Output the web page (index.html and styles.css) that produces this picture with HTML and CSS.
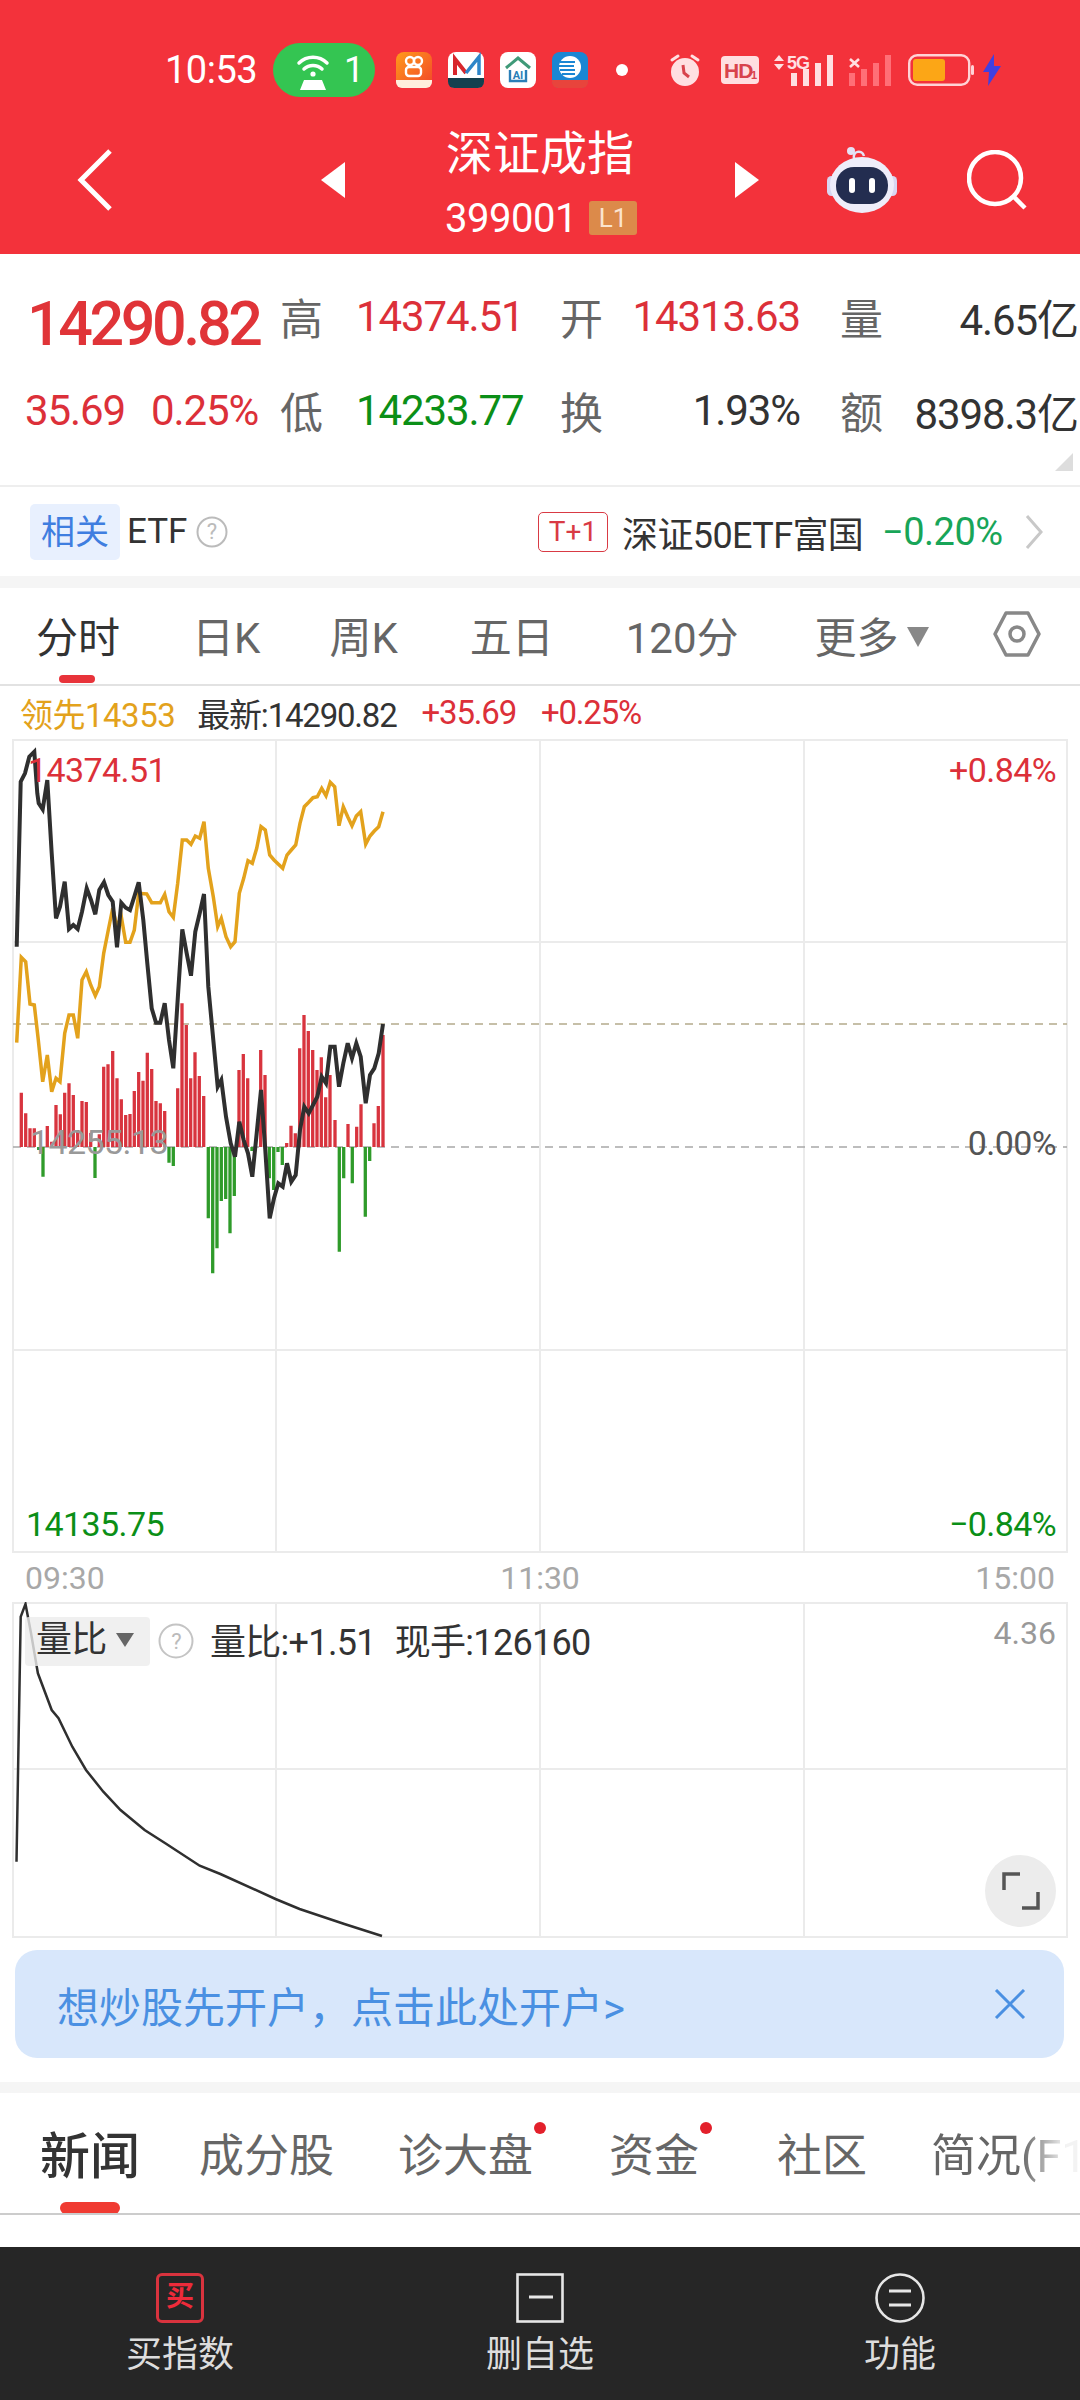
FILE: index.html
```html
<!DOCTYPE html>
<html lang="zh-CN">
<head>
    <meta charset="UTF-8">
    <meta name="viewport" content="width=device-width, initial-scale=1.0">
    <title>深证成指 399001</title>
    <link rel="stylesheet" href="styles.css">
</head>
<body>
    <div class="topbar">
        <div class="status-bar">
            <span class="clock">10:53</span>
            <div class="hotspot">
                <svg width="42" height="40" viewBox="0 0 42 40"><path d="M7 13a20 20 0 0 1 28 0M12 19a13 13 0 0 1 18 0" fill="none" stroke="#fff" stroke-width="3.5" stroke-linecap="round"/><circle cx="21" cy="24" r="2.6" fill="#fff"/><path d="M8 40l4-10h18l4 10z" fill="#fff"/></svg>
                <span>1</span>
            </div>
            <div class="app-icons">
                <svg width="36" height="36" viewBox="0 0 36 36"><defs><linearGradient id="ks" x1="0" y1="0" x2="1" y2="1"><stop offset="0" stop-color="#ff9a1a"/><stop offset="1" stop-color="#f2452a"/></linearGradient></defs><rect width="36" height="36" rx="8" fill="url(#ks)"/><circle cx="14" cy="9" r="4" fill="none" stroke="#fff" stroke-width="2.4"/><circle cx="22" cy="9" r="4" fill="none" stroke="#fff" stroke-width="2.4"/><rect x="10" y="15" width="15" height="9" rx="3" fill="none" stroke="#fff" stroke-width="2.4"/><path d="M0 28h36v2a6 6 0 0 1-6 6H6a6 6 0 0 1-6-6z" fill="#ffeedd"/></svg>
                <svg width="36" height="36" viewBox="0 0 36 36"><rect width="36" height="36" rx="8" fill="#fff"/><path d="M0 26h36v4a6 6 0 0 1-6 6H6a6 6 0 0 1-6-6z" fill="#14404f"/><path d="M7 23V7l11 14" fill="none" stroke="#d8262c" stroke-width="4"/><path d="M18 21L31 5v18" fill="none" stroke="#2e86c9" stroke-width="3.5"/></svg>
                <svg width="36" height="36" viewBox="0 0 36 36"><rect width="36" height="36" rx="8" fill="#fff"/><path d="M6 16L18 6l12 10" fill="none" stroke="#3f9a78" stroke-width="3"/><path d="M10 18v11h16V18" fill="none" stroke="#2a7fb8" stroke-width="2.4"/><text x="18" y="27" class="ai-text">AI</text></svg>
                <svg width="36" height="36" viewBox="0 0 36 36"><rect width="36" height="36" rx="8" fill="#1b86d3"/><circle cx="18" cy="15" r="11" fill="#fff"/><path d="M8 10h15M7 14h15M8 18h15M10 22h13" stroke="#1b86d3" stroke-width="2"/><path d="M0 28h36v2a6 6 0 0 1-6 6H6a6 6 0 0 1-6-6z" fill="#e8443c"/></svg>
            </div>
            <span class="status-dot"></span>
            <svg class="alarm" width="32" height="34" viewBox="0 0 32 34"><circle cx="16" cy="19" r="14" fill="#ffdfe1"/><path d="M3 7l6-4M29 7l-6-4" stroke="#ffdfe1" stroke-width="3" stroke-linecap="round"/><path d="M14 12l1 8 5 4" fill="none" stroke="#d8434c" stroke-width="3"/></svg>
            <svg class="hd" width="38" height="28" viewBox="0 0 38 28"><rect width="38" height="28" rx="4" fill="#ffdfe1"/><text x="3" y="22" class="hd-text">HD</text><text x="30" y="23" class="hd-sub">1</text></svg>
            <svg class="signal" width="60" height="32" viewBox="0 0 60 32"><path d="M0 7l5-6 5 6zM0 10h10l-5 6z" fill="#ffdfe1"/><text x="13" y="15" class="g-text">5G</text><path d="M17 19h6v13h-6zM29 15h6v17h-6zM41 9h6v23h-6zM53 1h6v31h-6z" fill="#ffdfe1"/></svg>
            <svg class="signal-off" width="44" height="32" viewBox="0 0 44 32"><path d="M1 5l9 8M10 5l-9 8" stroke="#ffdfe1" stroke-width="2.6"/><path d="M0 19h6v13H0zM12 15h6v17h-6zM24 9h6v23h-6zM36 1h6v31h-6z" fill="#ff6f77"/></svg>
            <svg class="battery" width="66" height="32" viewBox="0 0 66 32"><rect x="1.2" y="1.2" width="60" height="29.6" rx="8" fill="none" stroke="#ffd3d6" stroke-width="2.4"/><rect x="5" y="5" width="32" height="22" rx="3" fill="#fca616"/><rect x="63" y="11" width="3" height="10" rx="1.5" fill="#ffd3d6"/></svg>
            <svg class="bolt" width="18" height="32" viewBox="0 0 18 32"><path d="M11 0L0 18h6l-1 14L18 12h-7z" fill="#4140e0"/></svg>
        </div>
        <div class="nav-row">
            <svg class="back" width="36" height="64" viewBox="0 0 36 64"><path d="M33 3L4 32l29 29" fill="none" stroke="#fff" stroke-width="5"/></svg>
            <svg class="prev" width="24" height="36" viewBox="0 0 24 36"><path d="M24 0v36L0 18z" fill="#fff"/></svg>
            <div class="title-block">
                <div class="title">深证成指</div>
                <div class="code-row"><span class="code">399001</span><span class="level">L1</span></div>
            </div>
            <svg class="next" width="24" height="36" viewBox="0 0 24 36"><path d="M0 0v36l24-18z" fill="#fff"/></svg>
            <svg class="robot" width="72" height="66" viewBox="0 0 72 66"><path d="M28 12c-2-8 8-10 10-3" fill="none" stroke="#e4e2f6" stroke-width="2.5"/><circle cx="25" cy="4" r="4" fill="#e4e2f6"/><rect x="1" y="29" width="9" height="20" rx="4.5" fill="#d8d6f2"/><rect x="62" y="29" width="9" height="20" rx="4.5" fill="#d8d6f2"/><ellipse cx="36" cy="38" rx="32" ry="28" fill="#eeedfa"/><rect x="10" y="20" width="52" height="37" rx="18" fill="#232d50"/><rect x="23" y="31" width="6" height="15" rx="3" fill="#fff"/><rect x="43" y="31" width="6" height="15" rx="3" fill="#fff"/></svg>
            <svg class="search" width="60" height="60" viewBox="0 0 60 60"><circle cx="28" cy="28" r="26" fill="none" stroke="#fff" stroke-width="4.5"/><path d="M47 47l11 11" stroke="#fff" stroke-width="4.5"/></svg>
        </div>
    </div>

    <div class="stats">
        <div class="quote-main">14290.82</div>
        <div class="stat-label">高</div>
        <div class="stat-val first up">14374.51</div>
        <div class="stat-label">开</div>
        <div class="stat-val mid up">14313.63</div>
        <div class="stat-label">量</div>
        <div class="stat-val last">4.65亿</div>

        <div class="quote-sub up"><span>35.69</span><span>0.25%</span></div>
        <div class="stat-label">低</div>
        <div class="stat-val first down">14233.77</div>
        <div class="stat-label">换</div>
        <div class="stat-val mid">1.93%</div>
        <div class="stat-label">额</div>
        <div class="stat-val last">8398.3亿</div>
        <span class="corner"></span>
    </div>

    <div class="etf-row">
        <span class="etf-tag">相关</span>
        <span class="etf-name">ETF</span>
        <svg class="help" width="32" height="32" viewBox="0 0 32 32"><circle cx="16" cy="16" r="14.5" fill="none" stroke="#bbb" stroke-width="2"/><text x="16" y="23" class="help-text">?</text></svg>
        <span class="t1">T+1</span>
        <span class="fund">深证50ETF富国</span>
        <span class="fund-pct">−0.20%</span>
        <svg width="18" height="34" viewBox="0 0 18 34"><path d="M2 1l14 16L2 33" fill="none" stroke="#c8c8c8" stroke-width="3"/></svg>
    </div>
    <div class="gap"></div>

    <div class="period-tabs">
        <span class="period active">分时</span>
        <span class="period">日K</span>
        <span class="period">周K</span>
        <span class="period">五日</span>
        <span class="period">120分</span>
        <span class="period">更多<i class="more-arrow"></i></span>
        <svg width="48" height="46" viewBox="0 0 48 46"><path d="M13 2h22l11 21-11 21H13L2 23z" fill="none" stroke="#888" stroke-width="3.5" stroke-linejoin="round"/><circle cx="24" cy="23" r="7" fill="none" stroke="#888" stroke-width="3.5"/></svg>
    </div>

    <div class="legend">
        <span class="lead">领先14353</span>
        <span>最新:14290.82</span>
        <span class="up">+35.69</span>
        <span class="up">+0.25%</span>
    </div>

    <div class="chart-main">
        <svg width="1080" height="814" viewBox="0 739 1080 814">
            <path class="grid" d="M13 740H1067V1552H13ZM276 740V1552M540 740V1552M804 740V1552M13 942H1067M13 1350H1067"/>
            <path class="dash-tan" d="M13 1024H1067"/>
            <path class="dash-gray" d="M13 1147H1067"/>
            <path class="bars-red" d="M21.3 1147V1092.7M25.7 1147V1113.3M30 1147V1128.3M34.3 1147V1128.3M47.3 1147V1126M51.7 1147V1141.7M56 1147V1105M60.3 1147V1114.3M64.7 1147V1092.7M69 1147V1083.3M73.3 1147V1095M77.7 1147V1130M82 1147V1101M86.3 1147V1102M90.7 1147V1133M99.3 1147V1134.3M103.7 1147V1066.7M108 1147V1064.3M112.7 1147V1051M117 1147V1078.3M121.3 1147V1099.3M125.7 1147V1115M130 1147V1114M134.3 1147V1091M138.7 1147V1072M143 1147V1080.7M147.3 1147V1052.7M151.7 1147V1069M156 1147V1101M160.3 1147V1103.3M164.7 1147V1111M177.7 1147V1088.3M182 1147V1003.3M186.3 1147V1025M190.7 1147V1078.3M195 1147V1052.3M199.3 1147V1076M203.7 1147V1096M239 1147V1070M243.3 1147V1054M247.7 1147V1078.3M260.7 1147V1050M265 1147V1075M286.7 1147V1143M291 1147V1125.7M295.3 1147V1133.3M299.7 1147V1048.3M304 1147V1015M308.3 1147V1031M312.7 1147V1050M317 1147V1070M321.3 1147V1057.3M325.7 1147V1097.3M330 1147V1075M335 1147V1120M348 1147V1124M356.7 1147V1126.7M361 1147V1104.3M374 1147V1123.3M378.3 1147V1106M383 1147V1035"/>
            <path class="bars-green" d="M38.7 1147V1150M43 1147V1176.7M95 1147V1178M169 1147V1162.7M173.3 1147V1166M208.3 1147V1218.3M212.7 1147V1273.3M217 1147V1248.3M221.3 1147V1201M225.7 1147V1199M230 1147V1233.3M234.3 1147V1196M252 1147V1151M269.3 1147V1178.3M273.7 1147V1190M278 1147V1152M282.3 1147V1165M339.3 1147V1251.7M343.7 1147V1178.3M352.3 1147V1183.3M365.3 1147V1216.7M369.7 1147V1161"/>
            <polyline class="line-lead" points="16.7,1042.7 21.3,957.3 25.7,961.7 30,1004 34.3,1005 38.3,1040 42.7,1081.7 47.3,1055 51.7,1091.7 56,1078.3 60,1081.7 64.7,1033.3 69,1015 73.3,1015 77.7,1038.3 82,980 86.3,971.7 90.7,985 95.3,995.7 99.3,986.7 103.7,953.3 108.3,930 112.7,908.3 117,926.7 121.3,916.7 125.7,942.3 130,942.3 134.3,930 138.7,893.3 146.7,894 151.7,902.7 160.3,902.7 164.7,894.3 169,911.7 173.3,917.3 177.7,883.3 182.3,840 186.7,840 191,844.3 195.3,836 199.7,838.3 204,821.7 208.3,868.3 213.3,896.7 217.7,926.7 221.3,918.3 226,936.7 230.7,946.7 235,941.7 239.3,893.3 243.7,878.3 248,860.7 252.3,863.3 256.7,848.3 261,826.7 265.3,830 269.7,855 274,860 282.7,868.3 287,855 291.3,850 295.7,845 300,823.3 304.3,806.7 308.7,802.3 313,797.7 317.3,796.7 321.7,788.3 326,795.7 330.3,782.3 334.7,786.7 339,825.7 343.3,806.7 347.7,816.7 352,825.7 356.3,816 360.7,811.7 365.7,844.3 370,836 374.3,831 378.7,826.7 383,811.7"/>
            <polyline class="line-price" points="16.7,946.7 20.7,781.7 25,773.3 29.3,756.7 34.3,751.7 37.3,793.3 38.7,803.3 42.7,809.3 47.3,780 51.7,853.3 56,918.3 60,906.7 64.7,881.7 69,929 73.3,925 77.7,929 82,911.7 86.7,888.3 91,900 95.3,914.3 99.3,890 104,882.3 108.3,895 112.7,901.7 117,947.3 121.3,902.7 125.7,907.7 130,910 134.3,896.7 138.7,882.3 143.3,920 147.3,963.3 151.7,1008.3 156,1022.7 160.3,1022.7 164.7,1003.3 169,1040 173.3,1068.3 178.3,990 182.3,929.3 186.7,953.3 191,975.7 195.3,931.7 199.7,913.3 204,894 208.3,986.7 213.3,1040 217.7,1086.7 221.3,1080 226,1116.7 230.7,1143.3 235,1156.7 239.3,1121.7 243.7,1140 248,1153.3 252.3,1176.7 256.7,1133.3 261,1090 265.3,1150 269.7,1218.3 274,1198.3 278.3,1183.3 282.7,1186.7 287,1163.3 291.3,1181.7 295.7,1175 300,1130 304.3,1106.7 308.7,1113.3 313,1105 317.3,1096.7 321.7,1076.7 326,1083.3 330.3,1046.7 334.7,1046.7 339,1086.7 343.3,1063.3 347.7,1043.3 352,1058.3 356.3,1043.3 360.7,1056.7 365.7,1103.3 370,1075 374.3,1068.3 378.7,1053.3 383,1024"/>
        </svg>
        <span class="axis top-left up">14374.51</span>
        <span class="axis top-right up">+0.84%</span>
        <span class="axis mid-left">14255.13</span>
        <span class="axis mid-right">0.00%</span>
        <span class="axis bottom-left down">14135.75</span>
        <span class="axis bottom-right down">−0.84%</span>
    </div>

    <div class="time-row">
        <span>09:30</span>
        <span>11:30</span>
        <span>15:00</span>
    </div>

    <div class="chart-sub">
        <svg width="1080" height="336" viewBox="0 1602 1080 336">
            <path class="grid" d="M13 1603H1067V1937H13ZM276 1603V1937M540 1603V1937M804 1603V1937M13 1769H1067"/>
            <polyline class="line-ratio" points="16.5,1861.7 20.7,1616.7 25.5,1604 31,1633 37.9,1673.3 51.7,1710 58.5,1718.3 72.3,1746.7 86,1770 103.3,1791.7 120.5,1810 144.6,1830 165.3,1843.3 199.7,1865.7 220.4,1874 275.5,1899 299.6,1909 344.4,1924 382,1936"/>
        </svg>
        <div class="ratio-bar">
            <span class="ratio-tag">量比<i class="tag-arrow"></i></span>
            <svg class="ratio-help" width="36" height="36" viewBox="0 0 36 36"><circle cx="18" cy="18" r="16.5" fill="none" stroke="#c4c4c4" stroke-width="2"/><text x="18" y="26" class="help-text">?</text></svg>
            <span class="ratio-val">量比:+1.51</span>
            <span class="ratio-hand">现手:126160</span>
        </div>
        <span class="ratio-max">4.36</span>
        <div class="expand">
            <svg width="38" height="38" viewBox="0 0 38 38"><path d="M2 18V2h16M36 20v16H20" fill="none" stroke="#555" stroke-width="3.5"/></svg>
        </div>
    </div>

    <div class="banner">
        <span>想炒股先开户，点击此处开户&gt;</span>
        <svg width="32" height="30" viewBox="0 0 32 30"><path d="M2 1l28 28M30 1L2 29" stroke="#4a90e2" stroke-width="3"/></svg>
    </div>
    <div class="gap bottom-gap"></div>

    <div class="news-tabs">
        <span class="news-tab active">新闻</span>
        <span class="news-tab">成分股</span>
        <span class="news-tab dotted">诊大盘</span>
        <span class="news-tab dotted">资金</span>
        <span class="news-tab">社区</span>
        <span class="news-tab faded">简况(F10)</span>
    </div>
    <div class="spacer"></div>

    <div class="footer">
        <div class="foot-item">
            <div class="buy-icon">买</div>
            <span>买指数</span>
        </div>
        <div class="foot-item">
            <svg width="48" height="50" viewBox="0 0 48 50"><rect x="1.5" y="1.5" width="45" height="47" fill="none" stroke="#e6e6e6" stroke-width="2.6"/><path d="M13 24h24" stroke="#e6e6e6" stroke-width="3"/></svg>
            <span>删自选</span>
        </div>
        <div class="foot-item">
            <svg width="50" height="50" viewBox="0 0 50 50"><circle cx="25" cy="25" r="23.5" fill="none" stroke="#e6e6e6" stroke-width="2.6"/><path d="M14 18h22M14 32h22" stroke="#e6e6e6" stroke-width="3"/></svg>
            <span>功能</span>
        </div>
    </div>
</body>
</html>
```

FILE: styles.css
```css
* {
    box-sizing: border-box;
}
body {
    margin: 0;
    width: 1080px;
    height: 2400px;
    overflow: hidden;
    background-color: white;
    font-family: Roboto, "Noto Sans CJK SC", sans-serif;
    color: #333;
}
svg {
    display: block;
    flex: none;
}
.up {
    color: #dc3039;
}
.down {
    color: #0b8f17;
}

/* red header */
.topbar {
    height: 254px;
    background-color: #f3323b;
    color: white;
}
.status-bar {
    display: flex;
    align-items: center;
    height: 97px;
    padding: 43px 0 0 165px;
}
.clock {
    width: 92px;
    font-size: 38px;
    letter-spacing: -0.5px;
}
.hotspot {
    display: flex;
    align-items: center;
    gap: 10px;
    width: 102px;
    height: 54px;
    margin-left: 16px;
    padding-left: 19px;
    border-radius: 27px;
    background-color: #34c552;
    font-size: 36px;
}
.app-icons {
    display: flex;
    gap: 16px;
    margin-left: 21px;
}
.ai-text {
    font: bold 11px Roboto, sans-serif;
    fill: #2a7fb8;
    text-anchor: middle;
}
.status-dot {
    width: 12px;
    height: 12px;
    margin-left: 28px;
    border-radius: 50%;
    background-color: white;
}
.alarm {
    margin-left: 41px;
}
.hd {
    margin-left: 20px;
}
.hd-text {
    font: bold 21px "Liberation Sans", sans-serif;
    fill: #d8434c;
    letter-spacing: -1px;
}
.hd-sub {
    font: bold 11px "Liberation Sans", sans-serif;
    fill: #d8434c;
}
.signal {
    margin-left: 15px;
}
.g-text {
    font: bold 18px "Liberation Sans", sans-serif;
    fill: #ffdfe1;
    letter-spacing: -1px;
}
.signal-off {
    margin-left: 15px;
}
.battery {
    margin-left: 15px;
}
.bolt {
    margin-left: 9px;
}
.nav-row {
    display: flex;
    align-items: center;
    height: 157px;
    padding: 8px 0 0 77px;
}
.prev {
    margin-left: 208px;
}
.title-block {
    align-self: flex-start;
    width: 390px;
    margin-top: 21px;
    text-align: center;
}
.title {
    height: 56px;
    margin-bottom: 6px;
    font-size: 47px;
    line-height: 56px;
}
.code-row {
    display: flex;
    justify-content: center;
    align-items: center;
    gap: 12px;
    height: 60px;
    padding-left: 2px;
}
.code {
    font-size: 40px;
    letter-spacing: -0.5px;
}
.level {
    width: 48px;
    height: 34px;
    border-radius: 3px;
    background-color: #dc8a4a;
    color: #fbe3cf;
    font-size: 26px;
    line-height: 34px;
}
.robot {
    margin-left: 67px;
}
.search {
    margin-left: 69px;
}

/* quote block */
.stats {
    position: relative;
    display: grid;
    grid-template-columns: 280px 42px 238px 40px 240px 40px 200px;
    grid-auto-rows: 94px;
    align-items: center;
    height: 231px;
    padding-top: 15px;
}
.quote-main {
    padding: 16px 0 0 27px;
    color: #e03438;
    font-size: 61px;
    font-weight: 500;
    letter-spacing: -3.4px;
}
.quote-sub {
    display: flex;
    gap: 26px;
    padding-left: 25px;
    font-size: 42px;
    letter-spacing: -1.1px;
}
.stat-label {
    color: #666;
    font-size: 43px;
}
.stat-val {
    font-size: 42px;
    letter-spacing: -1.1px;
    white-space: nowrap;
}
.stat-val.first {
    padding-left: 34px;
}
.stat-val.mid {
    padding-right: 40px;
    text-align: right;
}
.stat-val.last {
    padding-right: 2px;
    text-align: right;
}
.corner {
    position: absolute;
    top: 199px;
    left: 1055px;
    border-style: solid;
    border-width: 0 0 18px 18px;
    border-color: transparent transparent #ddd transparent;
}

/* related fund */
.etf-row {
    display: flex;
    align-items: center;
    height: 91px;
    padding-left: 30px;
    border-top: 2px solid #eee;
}
.etf-tag {
    width: 90px;
    height: 56px;
    border-radius: 5px;
    background-color: #e8f0fe;
    color: #3f7ee0;
    font-size: 34px;
    line-height: 56px;
    text-align: center;
}
.etf-name {
    width: 60px;
    margin-left: 7px;
    font-size: 35px;
}
.help-text {
    font: 22px Roboto, sans-serif;
    fill: #bbb;
    text-anchor: middle;
}
.help {
    margin-left: 9px;
}
.t1 {
    width: 70px;
    height: 40px;
    margin-left: 310px;
    border: 1.5px solid #d93a44;
    border-radius: 5px;
    color: #d93a44;
    font-size: 28px;
    line-height: 37px;
    text-align: center;
}
.fund {
    width: 240px;
    margin-left: 14px;
    font-size: 36px;
    letter-spacing: -0.6px;
    white-space: nowrap;
}
.fund-pct {
    width: 143px;
    margin-left: 20px;
    color: #18a558;
    font-size: 38px;
    letter-spacing: -0.5px;
}
.gap {
    height: 12px;
    background-color: #f5f5f5;
}

/* period tabs */
.period-tabs {
    display: flex;
    align-items: center;
    height: 98px;
    padding: 0 0 4px 36px;
    border-bottom: 2px solid #e2e2e2;
}
.period {
    position: relative;
    margin-right: 72px;
    color: #666;
    font-size: 42px;
    white-space: nowrap;
}
.period:nth-child(1) {
    margin-right: 72px;
}
.period:nth-child(2) {
    margin-right: 69px;
}
.period:nth-child(3) {
    margin-right: 72px;
}
.period:nth-child(5) {
    margin-right: 76px;
}
.period:nth-child(6) {
    margin-right: 64px;
}
.period.active {
    color: #333;
}
.period.active::after {
    content: "";
    position: absolute;
    left: 23px;
    bottom: -18px;
    width: 36px;
    height: 8px;
    border-radius: 4px;
    background-color: #e8333a;
}
.more-arrow {
    display: inline-block;
    margin-left: 8px;
    vertical-align: 6px;
    border-style: solid;
    border-width: 20px 11px 0 11px;
    border-color: #888 transparent transparent transparent;
}
.legend {
    display: flex;
    align-items: center;
    gap: 25px;
    height: 53px;
    padding-left: 20px;
    font-size: 33px;
    letter-spacing: -1.2px;
}
.lead {
    margin-right: -3px;
    color: #e3a21c;
    letter-spacing: -0.5px;
}

/* charts */
.chart-main,
.chart-sub {
    position: relative;
}
.grid {
    fill: none;
    stroke: #ebebeb;
    stroke-width: 2;
}
.dash-tan {
    stroke: #b4ab8c;
    stroke-width: 1.5;
    stroke-dasharray: 8 6;
}
.dash-gray {
    stroke: #a8a8a8;
    stroke-width: 1.5;
    stroke-dasharray: 8 6;
}
.bars-red {
    stroke: #d8343e;
    stroke-width: 3.3;
}
.bars-green {
    stroke: #2f9b2a;
    stroke-width: 3.3;
}
.line-lead {
    fill: none;
    stroke: #e3a21c;
    stroke-width: 3.5;
}
.line-price {
    fill: none;
    stroke: #2f2f2f;
    stroke-width: 4;
}
.line-ratio {
    fill: none;
    stroke: #2f2f2f;
    stroke-width: 2.5;
}
.axis {
    position: absolute;
    font-size: 34px;
    letter-spacing: -0.6px;
    line-height: 40px;
}
.top-left {
    top: 11px;
    left: 28px;
}
.top-right {
    top: 11px;
    right: 24px;
}
.mid-left {
    top: 383px;
    left: 30px;
    color: #999;
}
.mid-right {
    top: 384px;
    right: 24px;
    color: #555;
}
.bottom-left {
    top: 765px;
    left: 26px;
}
.bottom-right {
    top: 765px;
    right: 24px;
}
.time-row {
    display: flex;
    justify-content: space-between;
    align-items: center;
    height: 49px;
    padding: 0 25px;
    color: #a8a8a8;
    font-size: 32px;
}
.ratio-bar {
    position: absolute;
    top: 11px;
    left: 25px;
    display: flex;
    align-items: center;
    font-size: 36px;
    letter-spacing: -0.7px;
}
.ratio-tag {
    width: 125px;
    height: 49px;
    padding-left: 11px;
    border-radius: 4px;
    background-color: rgba(236, 236, 236, 0.8);
    line-height: 47px;
    white-space: nowrap;
}
.tag-arrow {
    display: inline-block;
    margin-left: 9px;
    vertical-align: 5px;
    border-style: solid;
    border-width: 14px 9px 0 9px;
    border-color: #666 transparent transparent transparent;
}
.ratio-help {
    margin: 0 16px 0 8px;
}
.ratio-val {
    margin-right: 19px;
    padding-bottom: 4px;
}
.ratio-hand {
    padding-bottom: 4px;
}
.ratio-max {
    position: absolute;
    top: 11px;
    right: 24px;
    color: #999;
    font-size: 32px;
    line-height: 40px;
}
.expand {
    position: absolute;
    top: 253px;
    left: 985px;
    display: flex;
    justify-content: center;
    align-items: center;
    width: 71px;
    height: 72px;
    border-radius: 50%;
    background-color: #ececec;
}

/* open account banner */
.banner {
    display: flex;
    justify-content: space-between;
    align-items: center;
    height: 108px;
    margin: 12px 16px 24px 15px;
    padding: 0 38px 0 42px;
    border-radius: 22px;
    background-color: #d8e7fb;
    color: #4a90e2;
    font-size: 42px;
}
.bottom-gap {
    height: 11px;
}

/* news tabs */
.news-tabs {
    display: flex;
    align-items: center;
    height: 122px;
    padding: 0 0 2px 40px;
    overflow: hidden;
    border-bottom: 2px solid #ccc;
    color: #666;
    font-size: 45px;
    white-space: nowrap;
}
.news-tab {
    position: relative;
    flex: none;
    margin-right: 64px;
}
.news-tab:nth-child(3) {
    margin-right: 76px;
}
.news-tab:nth-child(4) {
    margin-right: 78px;
}
.news-tab.active {
    margin-right: 59px;
    color: #333;
    font-size: 50px;
    font-weight: 500;
}
.news-tab.active::after {
    content: "";
    position: absolute;
    left: 20px;
    bottom: -26px;
    width: 60px;
    height: 12px;
    border-radius: 6px;
    background-color: #f03b32;
}
.news-tab.dotted::after {
    content: "";
    position: absolute;
    top: 2px;
    right: -13px;
    width: 12px;
    height: 12px;
    border-radius: 50%;
    background-color: #e3202b;
}
.faded {
    -webkit-mask-image: linear-gradient(to right, black 90px, rgba(0, 0, 0, 0.08) 135px);
    mask-image: linear-gradient(to right, black 90px, rgba(0, 0, 0, 0.08) 135px);
}
.spacer {
    height: 32px;
}

/* bottom actions */
.footer {
    display: grid;
    grid-template-columns: repeat(3, 360px);
    height: 153px;
    padding-top: 26px;
    background-color: #262626;
    color: #ddd;
    font-size: 36px;
}
.foot-item {
    display: flex;
    flex-direction: column;
    align-items: center;
    gap: 2px;
}
.buy-icon {
    width: 48px;
    height: 50px;
    border: 3px solid #d9333e;
    border-radius: 6px;
    color: #ee2b3a;
    font-size: 28px;
    font-weight: 700;
    line-height: 42px;
    text-align: center;
}
```
